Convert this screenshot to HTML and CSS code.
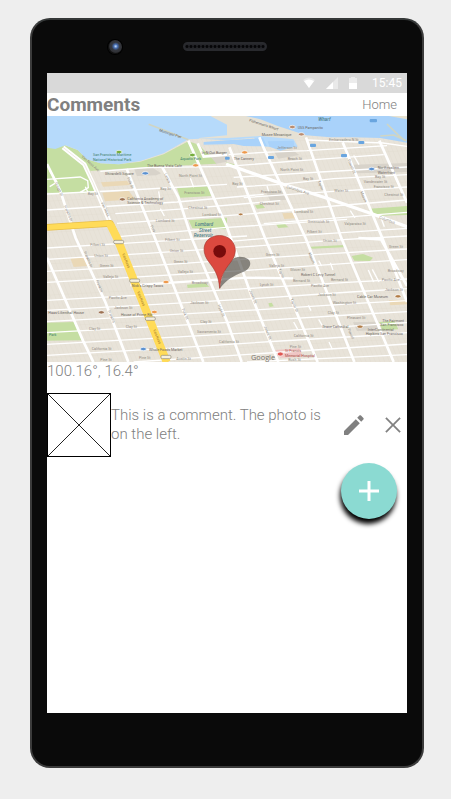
FILE: index.html
```html
<!DOCTYPE html>
<html lang="en">
<head>
<meta charset="utf-8">
<meta name="viewport" content="width=device-width, initial-scale=1">
<title>Comments</title>
<link rel="stylesheet" href="styles.css">
</head>
<body>
<div class="phone">
  <div class="phone-top">
    <span class="camera"></span>
    <span class="speaker"></span>
  </div>
  <div class="screen">
    <div class="status">
      <svg width="12" height="12" viewBox="0 0 12 12"><path d="M0 3Q6-2 12 3L6 11Z" fill="#e6e6e6"/><path d="M1 4Q6 1 11 4L6 11Z" fill="#fff"/></svg>
      <svg width="12" height="12" viewBox="0 0 12 12"><path d="M0 12L12 0V12Z" fill="#e9e9e9"/><path d="M0 12L7 5V12Z" fill="#fff"/></svg>
      <svg width="8" height="12" viewBox="0 0 8 12"><path d="M0 1H2V0H6V1H8V12H0Z" fill="#ececec"/><path d="M0 6H8V12H0Z" fill="#fff"/></svg>
      <span class="clock">15:45</span>
    </div>
    <header class="header">
      <h1>Comments</h1>
      <a href="#">Home</a>
    </header>
    <svg class="map" viewBox="0 0 1080 738" role="img" aria-label="Map">
      <defs>
        <pattern id="lots" width="14" height="46" patternUnits="userSpaceOnUse" patternTransform="skewX(22) skewY(-3)">
          <path d="M1 0V46M0 20H14" stroke="#ddd7cb" stroke-width="1" fill="none"/>
        </pattern>
      </defs>
      <rect width="1080" height="738" fill="#e8e3d9"/>
      <rect width="1080" height="738" fill="url(#lots)"/>
      <g fill="#c5dea2">
        <path d="M0 86L50 86L92 102L120 130L160 142L215 145L280 137L350 115L424 76L456 86L478 110L505 116L508 143L420 148L340 150L200 160L130 165L150 228L110 232L0 230Z"/>
        <path d="M390 217L485 211L492 240L400 245Z"/>
        <path d="M425 313L540 305V340L436 337Z"/>
        <path d="M966 278L1080 270V297L972 300Z"/>
        <path d="M624 268L645 264L654 276L630 278ZM687 325L712 322L724 334L694 336ZM537 139L560 144L569 150L537 152Z"/>
        <path d="M0 620L82 618L105 673L0 674ZM420 506L476 502L487 512L422 516Z"/>
        <path d="M790 392L892 387L890 394L796 398ZM914 420L948 414L978 425L969 435L922 434ZM996 618L1042 615L1054 640L1006 643ZM664 562L674 560L680 571L668 573Z"/>
      </g>
      <g fill="#ead8b6">
        <path d="M162 199L240 194L248 207L168 212ZM166 230L245 224L264 250L174 256ZM70 427L115 425L122 450L80 453ZM706 292L738 290L746 307L712 309ZM1026 553L1080 551V565L1030 568Z"/>
      </g>
      <g fill="#d8d3ca">
        <path d="M262 160L318 156L342 172L328 178L270 180ZM657 229L705 226L718 251L670 255ZM918 146L1080 141V168L928 172ZM482 112L540 108V137L508 143ZM680 105L735 101L757 117L694 128ZM918 619L988 617L996 642L930 645Z"/>
      </g>
      <path d="M685 702L758 697L767 722L700 725Z" fill="#efc6c4"/>
      <path d="M0 0H490L540 20L640 48L740 70L752 92L690 95L648 91L620 65L540 73L460 68L424 70L350 112L280 135L215 145L160 142L120 130L92 102L55 88L25 99L0 95Z" fill="#b6dafb"/>
      <path d="M490 0H602L640 10L690 29L770 56L777 64L740 70L640 60L540 66L455 68L475 50L540 40Z" fill="#e6e1d4"/>
      <path d="M424 0H490L540 26V58L455 66L424 64Z" fill="#b6dafb"/>
      <path d="M597 0L640 10L690 29L777 58L850 64L920 64L1000 66L1080 80V0Z" fill="#a9d2fa"/>
      <path d="M1025 0H1080V10Z" fill="#e6e1cf"/>
      <path d="M305 25L360 46L424 71M1020 24L1055 58L1073 74M1000 60L1040 57L1078 74" fill="none" stroke="#d0d5c3" stroke-width="5"/>
      <path d="M470 78L540 73L648 66L660 91L590 90L560 84L470 86ZM662 76L740 74L742 92L700 104L668 92Z" fill="#a9d2fa"/>
      <g fill="none" stroke="#fff" stroke-width="4">
        <path d="M0 190L100 183L122 194L124 215L98 230M8 165L30 198L8 212M0 234L250 222L540 205M0 282L390 258L650 235M205 293L420 278L700 254M210 322L540 299L780 280M215 362L530 335L900 310"/>
        <path d="M160 166L300 155L540 151L760 134L1010 116M545 116L650 109L780 104L1020 89M780 72L1008 81L1080 91M560 184L820 168L1080 153M570 213L700 205L860 188L1080 176M590 245L860 226L1080 213"/>
        <path d="M635 290L860 270L1080 252M650 323L1080 289M540 377L760 358L1080 337M0 396L280 379L600 360M0 430L300 412L600 392L900 370L1080 360"/>
        <path d="M0 466L310 449L540 433L850 413L1080 399M0 499L300 481L600 463L900 442L1080 431"/>
        <path d="M0 553L320 535L610 517L900 499L1080 489M0 583L330 565L620 548L910 528L1080 518M0 617L330 598L640 581L930 562L1080 554"/>
        <path d="M0 650L340 631L650 613L950 594L1080 587M0 685L370 664L680 646L980 626L1080 620M0 718L360 697L700 675L1000 657L1080 650M260 738L710 708L1080 684M600 738L1080 716"/>
        <path d="M115 212L124 232M335 226L338 246M340 278L352 300M430 187L440 214M660 210L666 229M920 118L936 146M910 284L924 306M1000 300L1012 332M964 462L980 498M976 460L996 498M815 434L824 450M850 440L858 462M740 618L752 640M815 610L830 636M846 678L856 700M784 568L792 584M240 434L252 458"/>
      </g>
      <g fill="none" stroke="#fff" stroke-width="8">
        <path d="M0 144L40 225L86 366L174 556L244 738"/>
        <path d="M239 159L325 369L469 738M346 154L394 244L434 366L540 616L584 738"/>
        <path d="M424 74L540 334L612 536L694 738M452 82L470 122L540 116M547 94L655 369L812 738M637 64L651 98L777 369L922 738"/>
        <path d="M777 64L882 364L1040 738M887 79L1007 369L1080 558M997 74L1080 260M934 366L1002 370L1080 510M0 425L109 676L139 738"/>
        <path d="M250 508L600 485L738 487" stroke-width="7"/>
        <path d="M537 144L707 204L847 249L977 294L1080 332" stroke-width="10"/>
      </g>
      <path d="M48 94L112 145L138 200L190 322" fill="none" stroke="#fff" stroke-width="13"/>
      <path d="M48 94L112 145L138 200L190 322M127 160L190 300" fill="none" stroke="#e5dfd2" stroke-width="2"/>
      <path d="M0 334L190 322L210 366L359 738" fill="none" stroke="#e8bf48" stroke-width="20" stroke-linejoin="round"/>
      <path d="M0 334L190 322L210 366L359 738" fill="none" stroke="#ffdb58" stroke-width="16" stroke-linejoin="round"/>
      <path d="M190 326L210 366L359 738" fill="none" stroke="#ffdb58" stroke-width="24"/>
      <g fill="#f6f0de" stroke="#8a8578" stroke-width="2">
        <rect x="200" y="373" width="30" height="10" rx="4"/><rect x="248" y="489" width="30" height="10" rx="4"/><rect x="295" y="603" width="30" height="10" rx="4"/><rect x="342" y="718" width="30" height="10" rx="4"/>
      </g>
      <g class="poi">
        <ellipse cx="216" cy="108" rx="9" ry="5" fill="#74ad3c"/><ellipse cx="436" cy="117" rx="9" ry="5" fill="#74ad3c"/>
        <ellipse cx="295" cy="172" rx="10" ry="5" fill="#5b91d0"/><ellipse cx="226" cy="250" rx="9" ry="5" fill="#9d7253"/>
        <ellipse cx="446" cy="148" rx="9" ry="5" fill="#ee994b"/>
        <ellipse cx="736" cy="33" rx="9" ry="5" fill="#b98c70"/><ellipse cx="763" cy="55" rx="9" ry="5" fill="#b98c70"/>
        <ellipse cx="593" cy="109" rx="9" ry="5" fill="#ee994b"/><ellipse cx="974" cy="159" rx="9" ry="5" fill="#5b91d0"/>
        <ellipse cx="357" cy="498" rx="9" ry="5" fill="#ee994b"/><ellipse cx="322" cy="588" rx="9" ry="5" fill="#ee994b"/>
        <ellipse cx="163" cy="589" rx="9" ry="5" fill="#9d7253"/><ellipse cx="289" cy="699" rx="9" ry="5" fill="#5b91d0"/>
        <ellipse cx="1053" cy="541" rx="9" ry="5" fill="#b17c46"/><ellipse cx="939" cy="632" rx="9" ry="5" fill="#b17c46"/>
        <ellipse cx="700" cy="714" rx="9" ry="6" fill="#df5651"/><ellipse cx="581" cy="295" rx="7" ry="4" fill="#b17c46"/>
      </g>
      <g fill="#69a5df">
        <rect x="968" y="9" width="22" height="10" rx="3"/><rect x="789" y="83" width="18" height="10" rx="3"/><rect x="934" y="75" width="18" height="9" rx="3"/><rect x="663" y="120" width="18" height="9" rx="3"/><rect x="882" y="114" width="18" height="10" rx="3"/><rect x="534" y="122" width="14" height="9" rx="3"/>
      </g>
      <g class="street">
        <text x="122" y="236">Bay St</text><text x="340" y="221">Bay St</text><text x="396" y="184">North Point St</text>
        <text x="412" y="235">Francisco St</text><text x="424" y="278">Chestnut St</text><text x="326" y="318">Lombard St</text><text x="466" y="300">Lombard St</text>
        <text x="690" y="100">Jefferson St</text><text x="722" y="132">Beach St</text><text x="700" y="164">North Point St</text><text x="768" y="193">Bay St</text><text x="556" y="206">Bay St</text>
        <text x="642" y="232">Francisco St</text><text x="638" y="266">Chestnut St</text><text x="742" y="290">Lombard St</text><text x="782" y="322">Greenwich St</text><text x="780" y="352">Filbert St</text>
        <text x="862" y="229">Water St</text><text x="984" y="187">Bay St</text><text x="950" y="201">Vandewater St</text><text x="980" y="215">Francisco St</text><text x="1012" y="241">Chestnut St</text><text x="892" y="328">Valparaiso St</text>
        <text x="846" y="76">Embarcadero N St</text>
        <text x="130" y="391">Filbert St</text><text x="142" y="422">Union St</text><text x="158" y="454">Green St</text><text x="168" y="485">Vallejo St</text><text x="185" y="549">Pacific Ave</text><text x="202" y="579">Jackson St</text>
        <text x="236" y="637">Clay St</text><text x="126" y="643">Clay St</text><text x="134" y="703">California St</text><text x="160" y="735">Pine St</text><text x="276" y="729">Pine St</text><text x="388" y="733">Austin St</text>
        <text x="354" y="376">Filbert St</text><text x="368" y="409">Union St</text><text x="380" y="441">Green St</text><text x="392" y="471">Vallejo St</text><text x="434" y="504">Broadway</text><text x="430" y="565">Jackson St</text><text x="460" y="622">Clay St</text><text x="450" y="650">Sacramento St</text><text x="516" y="680">California St</text>
        <text x="828" y="379">Union St</text><text x="656" y="420">Green St</text><text x="666" y="452">Vallejo St</text><text x="730" y="466">Glover St</text><text x="638" y="510">Lynch St</text><text x="738" y="497">Bernard St</text><text x="852" y="495">Bernard St</text><text x="792" y="512">Pacific Ave</text>
        <text x="812" y="539">Jackson St</text><text x="857" y="565">Washington St</text><text x="842" y="594">Clay St</text><text x="900" y="608">Pleasant St</text><text x="740" y="664">California St</text><text x="728" y="696">Pine St</text><text x="724" y="735">Bush St</text>
        <text x="1004" y="495">Pacific Ave</text><text x="1014" y="526">Jackson St</text><text x="1022" y="467">Broadway</text><text x="1026" y="396">Green St</text>
        <text transform="translate(103 122) rotate(42)">Van Ness Ave</text><text transform="translate(162 260) rotate(66)">Van Ness</text>
        <text transform="translate(24 200) rotate(67)">Gough St</text><text transform="translate(50 270) rotate(67)">Franklin St</text><text transform="translate(110 408) rotate(67)">Franklin St</text><text transform="translate(146 494) rotate(67)">Franklin</text><text transform="translate(182 585) rotate(67)">Franklin</text>
        <text transform="translate(240 186) rotate(67)">Polk St</text><text transform="translate(352 174) rotate(67)">Larkin</text><text transform="translate(310 330) rotate(67)">Polk</text><text transform="translate(512 568) rotate(67)">Hyde St</text><text transform="translate(404 580) rotate(67)">Polk St</text><text transform="translate(22 592) rotate(67)"></text>
        <text transform="translate(606 524) rotate(67)">Jones St</text><text transform="translate(650 632) rotate(67)">Jones St</text><text transform="translate(694 460) rotate(67)">Taylor</text><text transform="translate(730 550) rotate(67)">Taylor St</text><text transform="translate(784 412) rotate(67)">Mason</text>
        <text transform="translate(812 196) rotate(67)">Taylor</text><text transform="translate(902 132) rotate(67)">Powell St</text><text transform="translate(940 228) rotate(67)">Mason</text><text transform="translate(902 640) rotate(67)">Powell</text><text transform="translate(1022 638) rotate(67)"></text>
        <text transform="translate(225 414) rotate(67)" fill="#987022">Van Ness</text><text transform="translate(270 528) rotate(67)" fill="#987022">Van Ness</text><text transform="translate(318 642) rotate(67)" fill="#987022">Van Ness</text><text transform="translate(718 215) rotate(18)">Columbus Ave</text><text transform="translate(996 307) rotate(20)">Columbus</text>
      </g>
      <g class="place">
        <text class="park" x="138" y="121">San Francisco Maritime</text><text class="park" x="138" y="134">National Historical Park</text><text class="park" x="400" y="132">Aquatic Park</text>
        <text x="300" y="153">The Buena Vista Cafe</text><text x="174" y="176">Ghirardelli Square</text><text x="241" y="251">California Academy of</text><text x="241" y="264">Science &amp; Technology</text>
        <text x="464" y="114">In-N-Out Burger</text><text x="752" y="38">USS Pampanito</text><text x="644" y="59">Musee Mecanique</text><text x="560" y="133">The Cannery</text><text x="992" y="160">Northeastern</text><text x="992" y="173">Waterfront</text>
        <text transform="translate(606 16) rotate(18)">Fisherman's Wharf</text><text transform="translate(336 46) rotate(18)">Municipal Pier</text>
        <text x="254" y="514">Nick's Crispy Tacos</text><text x="222" y="600">House of Prime Rib</text><text x="4" y="593">Haas-Lilienthal House</text><text x="306" y="704">Whole Foods Market</text><text class="park" x="6" y="661">Park</text>
        <text x="762" y="480">Robert C Levy Tunnel</text><text x="930" y="546">Cable Car Museum</text><text x="826" y="636">Grace Cathedral</text><text x="1006" y="618">The Fairmont</text><text x="1000" y="631">San Francisco</text><text x="962" y="645">InterContinental</text><text x="956" y="658">Hopkins San Francisco</text>
        <text class="red" x="714" y="709">St Francis</text><text class="red" x="714" y="722">Memorial Hospital</text>
      </g>
      <g class="district"><text x="444" y="331">Lombard</text><text x="456" y="347">Street</text><text x="440" y="363">Reservoir</text><text x="814" y="14">Wharf</text></g>
      <text class="brand" x="612" y="731">Google</text>
      <path d="M518 518C526 471 543 424 578 422C619 423 618 455 590 467C560 479 539 490 518 518Z" fill="#4a4843" opacity=".62"/>
      <path d="M518 517C515 481 506 464 486 438C467 414 467 388 482 372C501 354 534 354 552 372C571 392 568 417 550 440C530 465 521 482 518 517Z" fill="#dc493f" stroke="#a6382f" stroke-width="2"/>
      <circle cx="518" cy="406" r="19" fill="#780b0b"/>
    </svg>
    <p class="coords">100.16°, 16.4°</p>
    <main>
      <article class="comment">
        <svg class="photo" viewBox="0 0 64 64" role="img" aria-label="Photo"><rect x="0.5" y="0.5" width="63" height="63" fill="#fff" stroke="#000"/><path d="M1 1L63 63M63 1L1 63" stroke="#222" fill="none"/></svg>
        <p>This is a comment. The photo is on the left.</p>
        <div class="actions">
          <button class="icon" aria-label="Edit"><svg viewBox="0 0 24 24"><path d="M2 18V22H6L17.8 10.2 13.8 6.2 2 18zM21.4 6.6c.5-.5.5-1.1 0-1.6L19 2.6c-.5-.5-1.1-.5-1.6 0L15.2 4.8l4 4 2.2-2.2z"/></svg></button>
          <button class="icon" aria-label="Delete"><svg viewBox="0 0 24 24"><path d="M19.5 5.6L18.4 4.5 12 10.9 5.6 4.5 4.5 5.6 10.9 12 4.5 18.4 5.6 19.5 12 13.1l6.4 6.4 1.1-1.1L13.1 12z" stroke="#808080" stroke-width=".4"/></svg></button>
        </div>
      </article>
      <button class="fab" aria-label="Add comment"><svg viewBox="0 0 28 28"><path d="M14 4V24M4 14H24" stroke="#fff" stroke-width="3" fill="none"/></svg></button>
    </main>
  </div>
</div>
</body>
</html>
```
FILE: styles.css
```css
* { box-sizing: border-box; }
body {
  margin: 0;
  padding: 18px 27px 31px 30px;
  background: #eee;
  color: #808080;
  font-family: Roboto, "Liberation Sans", sans-serif;
  font-weight: 300;
}
h1, p { margin: 0; }
button { border: 0; padding: 0; cursor: pointer; }
svg { display: block; }

.phone {
  padding: 0 15px 53px;
  background: #0a0a0a;
  border: 2px solid #3b3b3b;
  border-top-color: #353838;
  border-radius: 20px;
}
.phone-top {
  display: grid;
  grid-template-columns: 1fr 84px 1fr;
  align-items: center;
  height: 53px;
  padding-right: 4px;
}
.camera {
  width: 14px;
  height: 14px;
  margin-left: 61px;
  border-radius: 50%;
  background: radial-gradient(circle at 55% 45%, #c5e0ff 0, #466caf 2px, #35383f 4px, #303136 6px, #111 7px);
  box-shadow: 0 0 0 1px #000;
}
.speaker {
  height: 9px;
  border: 2px solid #292a2e;
  border-radius: 5px;
  background: radial-gradient(circle, #050507 1px, #25262a 2px) 0 0 / 4px 5px;
}

.screen { min-height: 640px; background: #fff; }
.status {
  display: flex;
  align-items: center;
  justify-content: flex-end;
  gap: 11px;
  height: 20px;
  padding-right: 5px;
  background: #d9d9d9;
}
.clock {
  margin-left: 4px;
  color: #fff;
  font-size: 12px;
  font-weight: 400;
  line-height: 20px;
}
.header {
  display: flex;
  align-items: center;
  justify-content: space-between;
  height: 23px;
  padding-right: 10px;
}
.header h1 { font-size: 19px; font-weight: 700; line-height: 23px; }
.header a { color: inherit; font-size: 13px; text-decoration: none; }

.map { width: 100%; height: auto; }
.street { font: 400 11px Roboto, sans-serif; fill: #918c83; }
.place { font: 400 11px Roboto, sans-serif; fill: #6b655e; }
.park { fill: #397d68; }
.red { fill: #a84e4b; }
.district { font: italic 500 14px Roboto, sans-serif; fill: #4b7d88; }
.brand { font: 400 22px "Open Sans", sans-serif; fill: #77736e; }
.poi { stroke: #fff; stroke-width: 2px; }

.coords { font-size: 15px; line-height: 19px; }
.comment {
  display: flex;
  align-items: center;
  margin-top: 12px;
}
.photo { flex: none; width: 64px; }
.comment p { flex: 1; font-size: 15px; line-height: 19px; }
.actions { display: flex; gap: 15px; padding: 0 2px 0 8px; }
.icon { width: 24px; height: 24px; background: none; }
.icon svg { fill: #808080; }
.fab {
  display: grid;
  place-items: center;
  width: 56px;
  height: 56px;
  margin: 6px 10px 0 auto;
  border-radius: 50%;
  background: #8bdad2;
  box-shadow: -1px 5px 5px #000;
}
.fab svg { width: 28px; height: 28px; }
```
